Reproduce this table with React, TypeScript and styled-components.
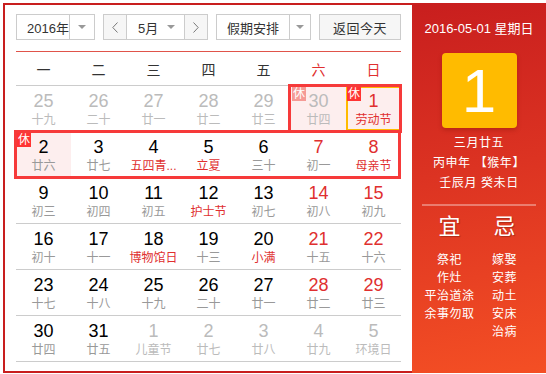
import React from 'react';
import styled, { createGlobalStyle } from 'styled-components';

const GlobalStyle = createGlobalStyle`
	html, body {
		margin: 0;
		padding: 0;
		background: #fff;
	}
	body {
		font-family: 'Liberation Sans', 'Noto Sans CJK SC', sans-serif;
		color: #333;
	}
`;

const RED = '#e02f2f';
const GREY = '#999';
const FADED = '#bbb';

const Page = styled.div`
	padding: 3px 0 0 3px;
`;

const Widget = styled.div`
	display: flex;
	width: 543px;
	height: 370px;
`;

const Main = styled.div`
	box-sizing: border-box;
	width: 409px;
	height: 370px;
	border: 2px solid #c81e1e;
	border-right: 0;
	padding: 9px 11px 0;
`;

const Toolbar = styled.div`
	display: flex;
	justify-content: space-between;
	height: 26px;
	font-size: 13px;
`;

const Box = styled.div<{ $width: number }>`
	box-sizing: border-box;
	display: flex;
	width: ${({ $width }) => $width}px;
	height: 26px;
	border: 1px solid #ccc;
	background: #fff;
`;

const Label = styled.div`
	flex: 1;
	display: flex;
	align-items: center;
	padding-left: 10px;
	white-space: nowrap;
`;

const ArrowCell = styled.div<{ $width: number }>`
	display: flex;
	align-items: center;
	justify-content: center;
	width: ${({ $width }) => $width}px;
	border-left: 1px solid #ccc;
`;

const Caret = styled.span`
	display: inline-block;
	width: 0;
	height: 0;
	border-left: 4px solid transparent;
	border-right: 4px solid transparent;
	border-top: 4px solid #999;
`;

const StepButton = styled.div<{ $side: 'left' | 'right' }>`
	display: flex;
	align-items: center;
	justify-content: center;
	width: 22px;
	background: #f6f6f6;
	${({ $side }) => ($side === 'left' ? 'border-right' : 'border-left')}: 1px solid #ccc;
`;

const MonthLabel = styled.div`
	flex: 1;
	display: flex;
	align-items: center;
	justify-content: space-between;
	padding: 0 9px 0 11px;
`;

const TodayButton = styled.div`
	box-sizing: border-box;
	display: flex;
	align-items: center;
	justify-content: center;
	width: 82px;
	height: 26px;
	border: 1px solid #ccc;
	background: #f6f6f6;
	letter-spacing: 0.5px;
`;

const Calendar = styled.div`
	width: 385px;
	margin-top: 11px;
	border-top: 1px solid #e0534a;
`;

const WeekHeader = styled.div`
	display: grid;
	grid-template-columns: repeat(7, 55px);
	height: 33px;
	border-bottom: 1px solid #ccc;
`;

const WeekDay = styled.div<{ $weekend: boolean }>`
	display: flex;
	align-items: center;
	justify-content: center;
	font-size: 14px;
	color: ${({ $weekend }) => ($weekend ? RED : '#333')};
`;

const Weeks = styled.div`
	position: relative;
`;

const Week = styled.div`
	display: grid;
	grid-template-columns: repeat(7, 55px);
	height: 45px;
	border-bottom: 1px solid #ccc;

	&:last-child {
		border-bottom: 0;
	}
`;

const Cell = styled.div<{ $rest: boolean; $today: boolean }>`
	position: relative;
	box-sizing: border-box;
	padding-top: 5px;
	text-align: center;
	background: ${({ $rest }) => ($rest ? '#fdeeee' : 'transparent')};
	box-shadow: ${({ $today }) => ($today ? 'inset 0 0 0 2px #ffbb00' : 'none')};
`;

const DayNum = styled.div<{ $tone: 'normal' | 'red' | 'faded' }>`
	font-size: 18px;
	line-height: 20px;
	color: ${({ $tone }) => ($tone === 'red' ? RED : $tone === 'faded' ? FADED : '#000')};
`;

const Lunar = styled.div<{ $tone: 'normal' | 'red' | 'faded' }>`
	font-size: 12px;
	line-height: 18px;
	white-space: nowrap;
	color: ${({ $tone }) => ($tone === 'red' ? RED : $tone === 'faded' ? FADED : GREY)};
`;

const RestBadge = styled.span<{ $faded: boolean }>`
	position: absolute;
	top: 1px;
	left: 1px;
	width: 14px;
	height: 14px;
	font-size: 12px;
	line-height: 14px;
	color: #fff;
	background: ${({ $faded }) => ($faded ? '#f59a95' : '#f33')};
`;

const Mark = styled.div<{ $left: number; $top: number; $width: number }>`
	position: absolute;
	left: ${({ $left }) => $left}px;
	top: ${({ $top }) => $top}px;
	width: ${({ $width }) => $width}px;
	height: 49px;
	box-sizing: border-box;
	border: 3px solid #f63a3a;
	pointer-events: none;
`;

const Panel = styled.div`
	width: 134px;
	height: 370px;
	padding-top: 17px;
	box-sizing: border-box;
	background: linear-gradient(170deg, #c81e1e 0%, #dc3322 45%, #f44f24 100%);
	color: #fff;
	text-align: center;
`;

const PanelDate = styled.div`
	font-size: 13px;
	line-height: 18px;
`;

const BigDay = styled.div`
	width: 75px;
	height: 75px;
	margin: 15px auto 0;
	border-radius: 4px;
	background: #ffbb00;
	box-shadow: 0 2px 4px rgba(120, 20, 0, 0.35);
	font-size: 62px;
	line-height: 75px;
`;

const LunarLines = styled.div`
	margin-top: 5px;
	font-size: 12px;
	line-height: 20px;
	letter-spacing: 0.6px;
	white-space: nowrap;
`;

const Divider = styled.div`
	height: 2px;
	margin: 11px 10px 0;
	background: rgba(255, 255, 255, 0.35);
`;

const Advice = styled.div`
	display: grid;
	grid-template-columns: 55px 55px;
	margin: 6px 10px 0;
`;

const AdviceColumn = styled.div`
	display: flex;
	flex-direction: column;
	align-items: center;
`;

const AdviceHead = styled.div`
	font-size: 22px;
	line-height: 30px;
	margin-bottom: 9px;
	text-shadow: 1px 1px 1px rgba(0, 0, 0, 0.25);
`;

const AdviceItem = styled.div`
	font-size: 12px;
	line-height: 18px;
	letter-spacing: 0.5px;
	white-space: nowrap;
`;

type Tone = 'normal' | 'red' | 'faded';

interface Day {
	num: number;
	lunar: string;
	numTone?: Tone;
	lunarTone?: Tone;
	rest?: boolean;
	today?: boolean;
}

const faded = (num: number, lunar: string): Day => ({ num, lunar, numTone: 'faded', lunarTone: 'faded' });

const weeks: Day[][] = [
	[
		faded(25, '十九'),
		faded(26, '二十'),
		faded(27, '廿一'),
		faded(28, '廿二'),
		faded(29, '廿三'),
		{ ...faded(30, '廿四'), rest: true },
		{ num: 1, lunar: '劳动节', numTone: 'red', lunarTone: 'red', rest: true, today: true },
	],
	[
		{ num: 2, lunar: '廿六', rest: true },
		{ num: 3, lunar: '廿七' },
		{ num: 4, lunar: '五四青...', lunarTone: 'red' },
		{ num: 5, lunar: '立夏', lunarTone: 'red' },
		{ num: 6, lunar: '三十' },
		{ num: 7, lunar: '初一', numTone: 'red' },
		{ num: 8, lunar: '母亲节', numTone: 'red', lunarTone: 'red' },
	],
	[
		{ num: 9, lunar: '初三' },
		{ num: 10, lunar: '初四' },
		{ num: 11, lunar: '初五' },
		{ num: 12, lunar: '护士节', lunarTone: 'red' },
		{ num: 13, lunar: '初七' },
		{ num: 14, lunar: '初八', numTone: 'red' },
		{ num: 15, lunar: '初九', numTone: 'red' },
	],
	[
		{ num: 16, lunar: '初十' },
		{ num: 17, lunar: '十一' },
		{ num: 18, lunar: '博物馆日', lunarTone: 'red' },
		{ num: 19, lunar: '十三' },
		{ num: 20, lunar: '小满', lunarTone: 'red' },
		{ num: 21, lunar: '十五', numTone: 'red' },
		{ num: 22, lunar: '十六', numTone: 'red' },
	],
	[
		{ num: 23, lunar: '十七' },
		{ num: 24, lunar: '十八' },
		{ num: 25, lunar: '十九' },
		{ num: 26, lunar: '二十' },
		{ num: 27, lunar: '廿一' },
		{ num: 28, lunar: '廿二', numTone: 'red' },
		{ num: 29, lunar: '廿三', numTone: 'red' },
	],
	[
		{ num: 30, lunar: '廿四' },
		{ num: 31, lunar: '廿五' },
		faded(1, '儿童节'),
		faded(2, '廿七'),
		faded(3, '廿八'),
		faded(4, '廿九'),
		faded(5, '环境日'),
	],
];

const weekDays = ['一', '二', '三', '四', '五', '六', '日'];

const Chevron: React.FC<{ dir: 'left' | 'right' }> = ({ dir }) => (
	<svg width="6" height="11" viewBox="0 0 6 11">
		<polyline
			points={dir === 'left' ? '5.5,0.5 0.8,5.5 5.5,10.5' : '0.5,0.5 5.2,5.5 0.5,10.5'}
			fill="none"
			stroke="#777"
			strokeWidth="1"
		/>
	</svg>
);

const App: React.FC = () => (
	<Page>
		<GlobalStyle />
		<Widget>
			<Main>
				<Toolbar>
					<Box $width={79}>
						<Label>2016年</Label>
						<ArrowCell $width={24}>
							<Caret />
						</ArrowCell>
					</Box>
					<Box $width={105}>
						<StepButton $side="left">
							<Chevron dir="left" />
						</StepButton>
						<MonthLabel>
							5月
							<Caret />
						</MonthLabel>
						<StepButton $side="right">
							<Chevron dir="right" />
						</StepButton>
					</Box>
					<Box $width={95}>
						<Label>假期安排</Label>
						<ArrowCell $width={20}>
							<Caret />
						</ArrowCell>
					</Box>
					<TodayButton>返回今天</TodayButton>
				</Toolbar>

				<Calendar>
					<WeekHeader>
						{weekDays.map((d, i) => (
							<WeekDay key={d} $weekend={i > 4}>
								{d}
							</WeekDay>
						))}
					</WeekHeader>
					<Weeks>
						{weeks.map((week, w) => (
							<Week key={w}>
								{week.map((day, i) => (
									<Cell key={i} $rest={!!day.rest} $today={!!day.today}>
										{day.rest && <RestBadge $faded={day.numTone === 'faded'}>休</RestBadge>}
										<DayNum $tone={day.numTone || 'normal'}>{day.num}</DayNum>
										<Lunar $tone={day.lunarTone || 'normal'}>{day.lunar}</Lunar>
									</Cell>
								))}
							</Week>
						))}
						<Mark $left={272} $top={-2} $width={114} />
						<Mark $left={-2} $top={44} $width={387} />
					</Weeks>
				</Calendar>
			</Main>

			<Panel>
				<PanelDate>2016-05-01 星期日</PanelDate>
				<BigDay>1</BigDay>
				<LunarLines>
					<div>三月廿五</div>
					<div>丙申年 【猴年】</div>
					<div>壬辰月 癸未日</div>
				</LunarLines>
				<Divider />
				<Advice>
					<AdviceColumn>
						<AdviceHead>宜</AdviceHead>
						<AdviceItem>祭祀</AdviceItem>
						<AdviceItem>作灶</AdviceItem>
						<AdviceItem>平治道涂</AdviceItem>
						<AdviceItem>余事勿取</AdviceItem>
					</AdviceColumn>
					<AdviceColumn>
						<AdviceHead>忌</AdviceHead>
						<AdviceItem>嫁娶</AdviceItem>
						<AdviceItem>安葬</AdviceItem>
						<AdviceItem>动土</AdviceItem>
						<AdviceItem>安床</AdviceItem>
						<AdviceItem>治病</AdviceItem>
					</AdviceColumn>
				</Advice>
			</Panel>
		</Widget>
	</Page>
);

export default App;
